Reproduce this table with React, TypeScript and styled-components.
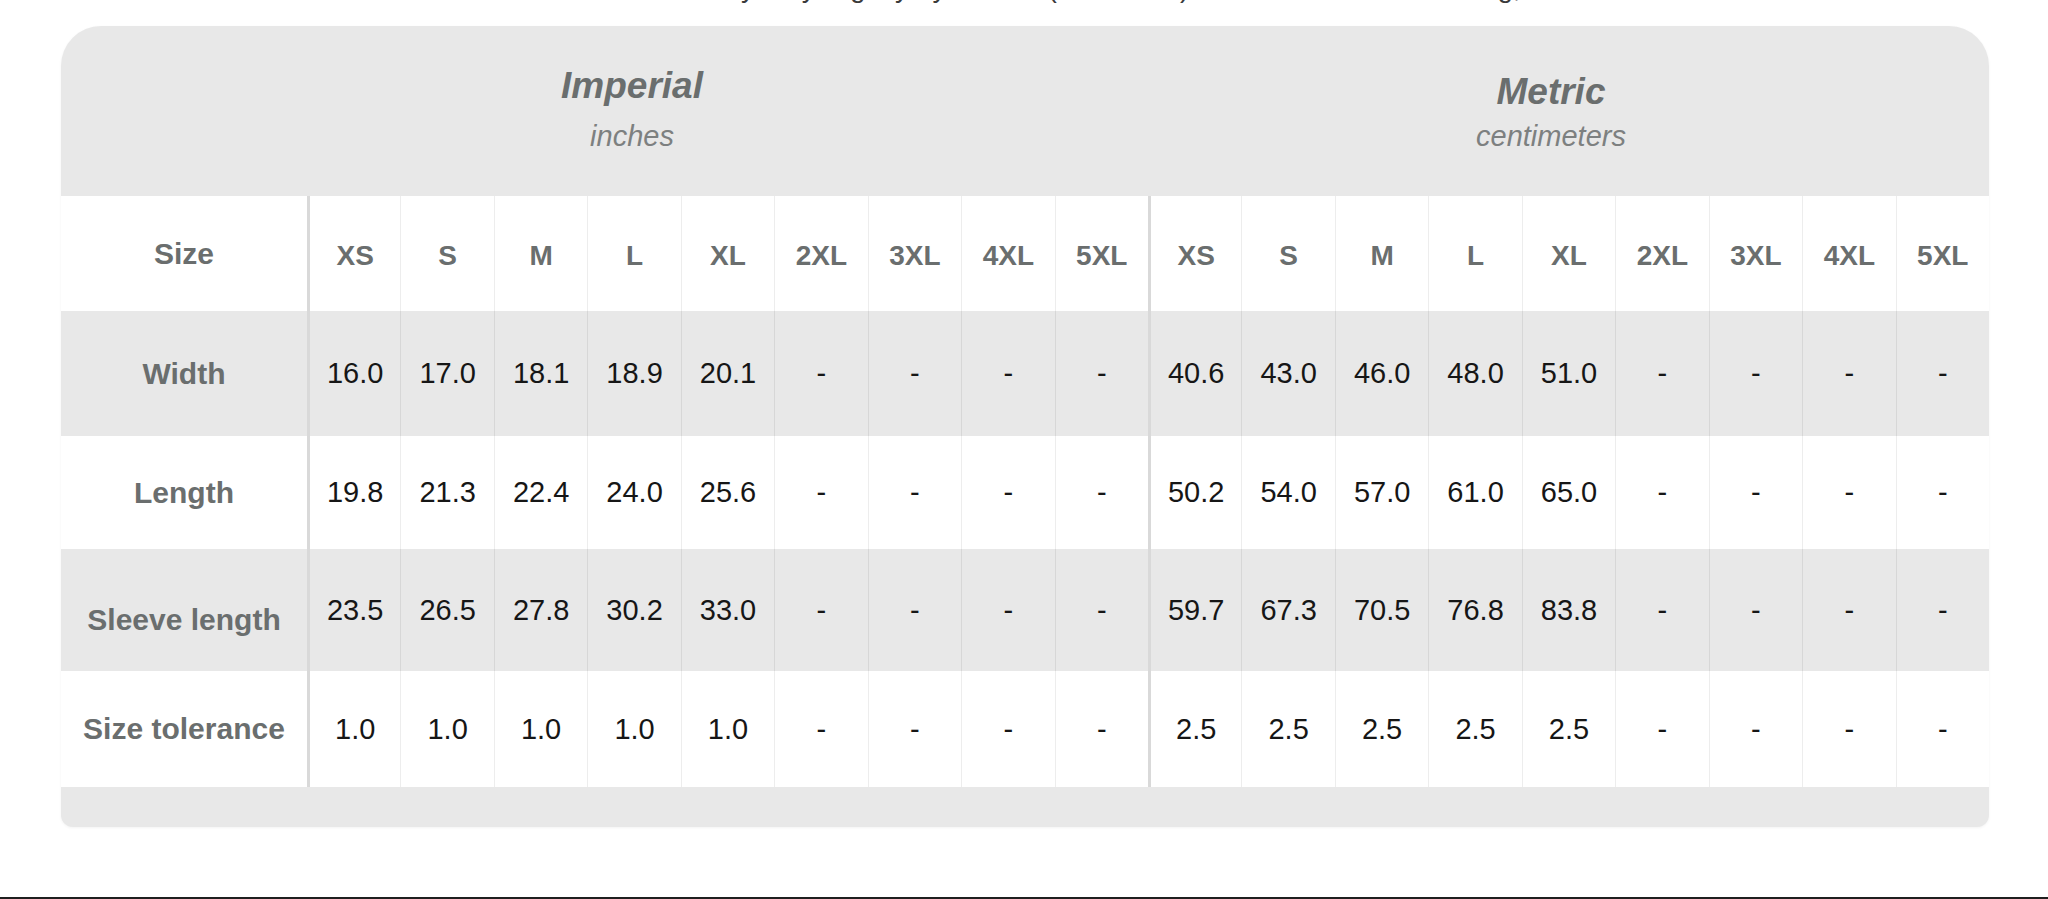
import React from 'react';
import styled, { createGlobalStyle } from 'styled-components';

const GlobalStyle = createGlobalStyle`
    html, body {
        margin: 0;
        padding: 0;
        background: #ffffff;
        overflow: hidden;
    }
    * {
        box-sizing: border-box;
    }
`;

const Page = styled.div`
    width: 2048px;
    height: 899px;
    display: flex;
    flex-direction: column;
    font-family: 'Liberation Sans', Arial, sans-serif;
`;

// the sentence above the card is cut by the top of the page, only descenders show
const Note = styled.div`
    margin-top: -27px;
    height: 30px;
    line-height: 30px;
    font-size: 28px;
    color: #3a3a3a;
    text-align: center;
    padding-left: 80px;
    white-space: nowrap;
`;

const Card = styled.div`
    margin: 23px 0 0 61px;
    width: 1928px;
    background: #e8e8e8;
    border-radius: 40px 40px 12px 12px;
    box-shadow: 0 1px 3px rgba(0, 0, 0, 0.05);
    overflow: hidden;
`;

const Header = styled.div`
    height: 170px;
    display: grid;
    grid-template-columns: 1142px 696px;
`;

const HeaderGroup = styled.div`
    display: flex;
    flex-direction: column;
    align-items: center;
    padding-top: 40px;
`;

const Title = styled.div<{ $drop: number }>`
    font-size: 37px;
    line-height: 40px;
    font-weight: 700;
    font-style: italic;
    color: #6a6e6e;
    padding-top: ${p => p.$drop}px;
    margin-bottom: -${p => p.$drop}px;
`;

const Subtitle = styled.div`
    margin-top: 13px;
    font-size: 29px;
    line-height: 34px;
    font-style: italic;
    color: #7d8080;
`;

const Row = styled.div<{ $height: number; $shaded?: boolean }>`
    display: grid;
    grid-template-columns: 246px repeat(18, 1fr);
    height: ${p => p.$height}px;
    background: ${p => (p.$shaded ? '#e8e8e8' : '#ffffff')};
`;

const LabelCell = styled.div<{ $nudge?: number }>`
    display: flex;
    align-items: center;
    justify-content: center;
    padding-top: ${p => p.$nudge || 0}px;
    font-size: 30px;
    font-weight: 700;
    color: #6a6e6e;
    white-space: nowrap;
`;

const Cell = styled.div<{ $groupStart?: boolean }>`
    display: flex;
    align-items: center;
    justify-content: center;
    border-left: ${p => (p.$groupStart ? '3px solid #d9d9d9' : '1px solid rgba(0, 0, 0, 0.07)')};
    white-space: nowrap;
`;

const SizeCell = styled(Cell)`
    font-size: 28px;
    font-weight: 700;
    color: #6a6e6e;
    padding-top: 4px;
`;

const ValueCell = styled(Cell)`
    font-size: 29px;
    color: #161616;
`;

const Footer = styled.div`
    height: 40px;
`;

const Rule = styled.div`
    margin-top: auto;
    height: 2px;
    background: #1f1f1f;
`;

const sizes = ['XS', 'S', 'M', 'L', 'XL', '2XL', '3XL', '4XL', '5XL'];

const fill = (values: string[]) => [...values, ...Array(9 - values.length).fill('-')];

const rows = [
    {
        label: 'Width',
        height: 125,
        shaded: true,
        imperial: ['16.0', '17.0', '18.1', '18.9', '20.1'],
        metric: ['40.6', '43.0', '46.0', '48.0', '51.0']
    },
    {
        label: 'Length',
        height: 113,
        shaded: false,
        imperial: ['19.8', '21.3', '22.4', '24.0', '25.6'],
        metric: ['50.2', '54.0', '57.0', '61.0', '65.0']
    },
    {
        label: 'Sleeve length',
        height: 122,
        shaded: true,
        nudge: 20,
        imperial: ['23.5', '26.5', '27.8', '30.2', '33.0'],
        metric: ['59.7', '67.3', '70.5', '76.8', '83.8']
    },
    {
        label: 'Size tolerance',
        height: 116,
        shaded: false,
        imperial: ['1.0', '1.0', '1.0', '1.0', '1.0'],
        metric: ['2.5', '2.5', '2.5', '2.5', '2.5']
    }
];

const App = () => {
    return (
        <Page>
            <GlobalStyle />
            <Note>Measurements may vary slightly by 1-2 cm (0.5-1 inch) due to manual measuring, thanks.</Note>
            <Card>
                <Header>
                    <HeaderGroup>
                        <Title $drop={0}>Imperial</Title>
                        <Subtitle>inches</Subtitle>
                    </HeaderGroup>
                    <HeaderGroup>
                        <Title $drop={6}>Metric</Title>
                        <Subtitle>centimeters</Subtitle>
                    </HeaderGroup>
                </Header>

                <Row $height={115}>
                    <LabelCell>Size</LabelCell>
                    {[...sizes, ...sizes].map((s, i) => (
                        <SizeCell key={i} $groupStart={i % 9 === 0}>
                            {s}
                        </SizeCell>
                    ))}
                </Row>

                {rows.map(r => (
                    <Row key={r.label} $height={r.height} $shaded={r.shaded}>
                        <LabelCell $nudge={r.nudge}>{r.label}</LabelCell>
                        {[...fill(r.imperial), ...fill(r.metric)].map((v, i) => (
                            <ValueCell key={i} $groupStart={i % 9 === 0}>
                                {v}
                            </ValueCell>
                        ))}
                    </Row>
                ))}

                <Footer />
            </Card>
            <Rule />
        </Page>
    );
};

export default App;
